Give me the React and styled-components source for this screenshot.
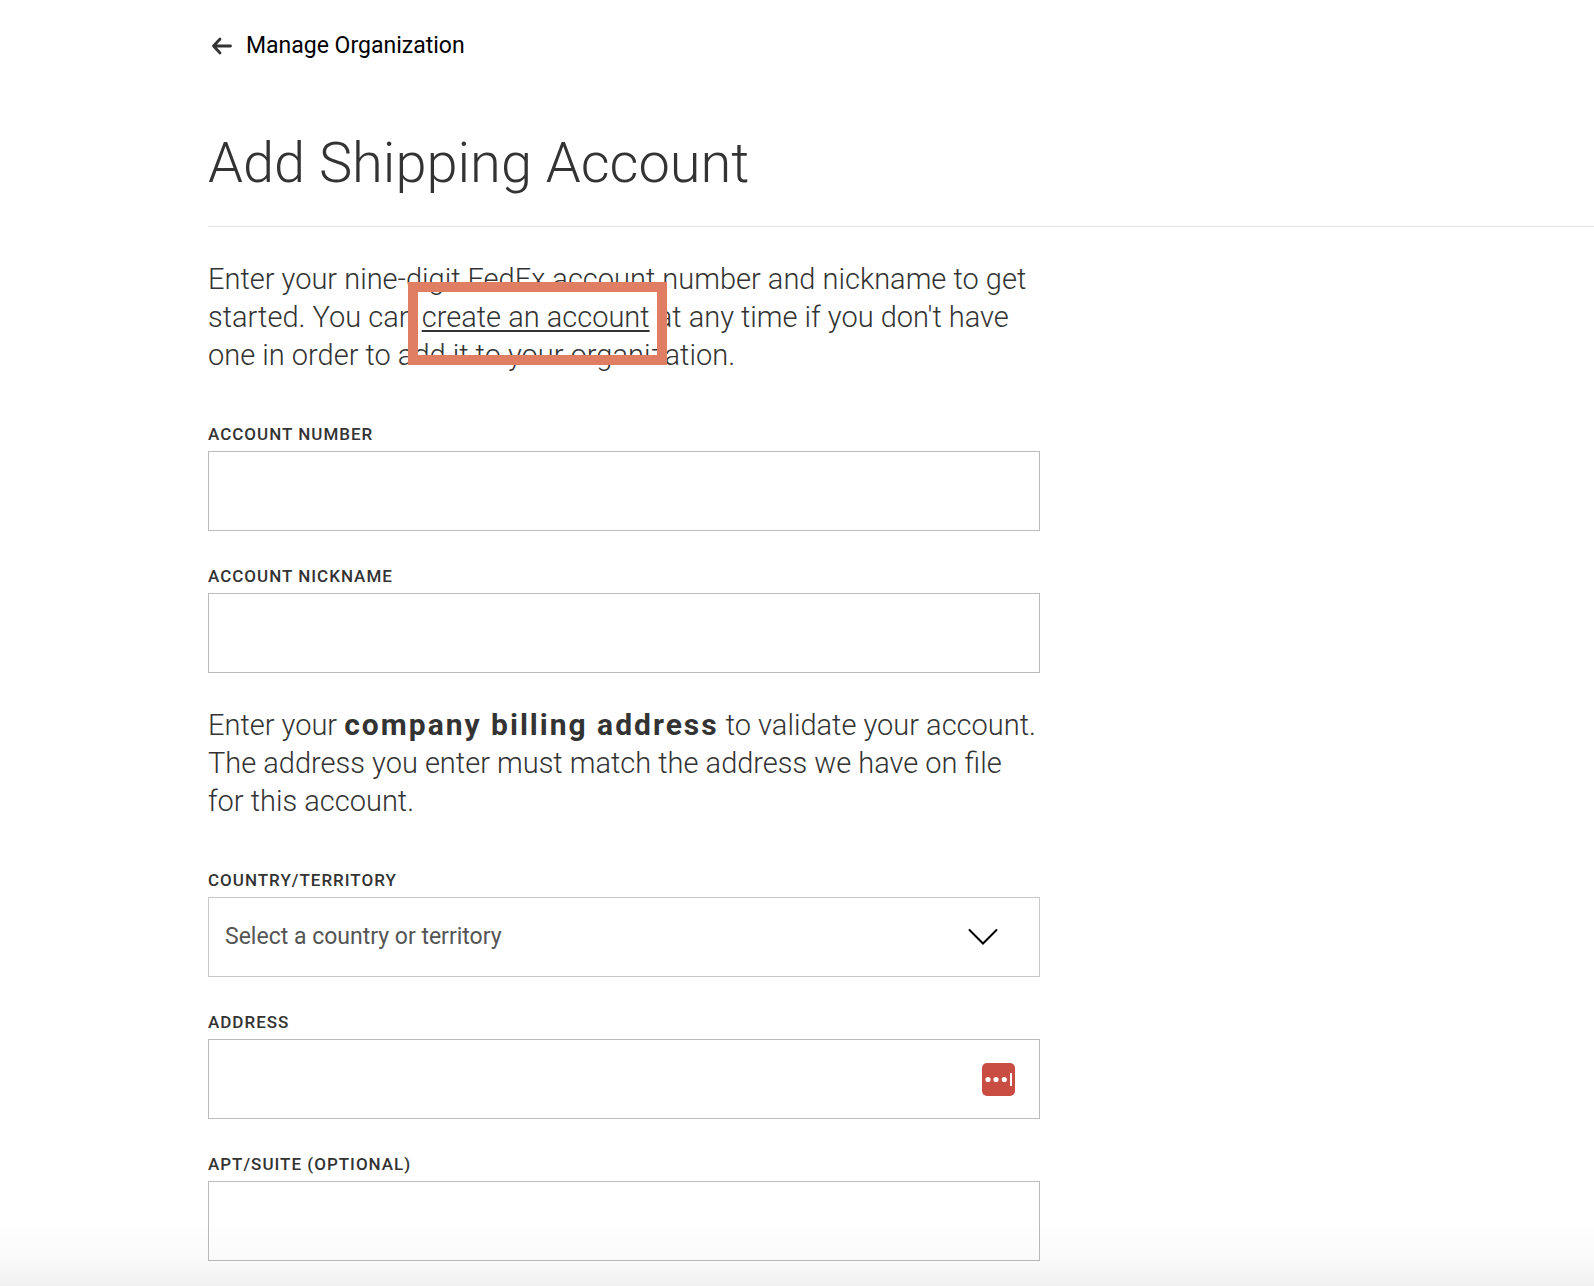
import React from "react";
import styled, { createGlobalStyle } from "styled-components";

const GlobalStyle = createGlobalStyle`
  *, *::before, *::after { box-sizing: border-box; }
  body {
    margin: 0;
    background: #fff;
    color: #333;
    font-family: Roboto, "Liberation Sans", sans-serif;
  }
`;

const Page = styled.main`
  min-height: 100vh;
  padding: 30px 0 24px 208px;
`;

const BackLink = styled.a`
  display: inline-flex;
  align-items: center;
  gap: 13px;
  padding-left: 3px;
  color: #000;
  font-size: 23px;
  line-height: 32px;
  text-decoration: none;
`;

const Header = styled.header`
  margin-top: 61px;
  padding-bottom: 23px;
  border-bottom: 1px solid #e3e3e3;
`;

const Title = styled.h1`
  margin: 0;
  font-size: 56px;
  font-weight: 300;
  line-height: 80px;
`;

const Form = styled.form`
  display: flex;
  flex-direction: column;
  gap: 33px;
  max-width: 832px;
  padding-top: 33px;
`;

const Intro = styled.p`
  margin: 0 0 15px;
  font-size: 29px;
  font-weight: 300;
  line-height: 38px;
`;

const Strong = styled.strong`
  font-size: 30px;
  font-weight: 700;
  line-height: 1;
  letter-spacing: 2px;
`;

const CreateLink = styled.a`
  position: relative;
  color: inherit;
  text-decoration: underline;
  text-decoration-thickness: 2px;
  text-underline-offset: 3px;
  white-space: nowrap;
`;

const Highlight = styled.span`
  position: absolute;
  inset: -18px -17px -31px -14px;
  border: 10px solid #e07e63;
  pointer-events: none;
`;

const FieldGroup = styled.div`
  display: flex;
  flex-direction: column;
  gap: 5px;
`;

const Label = styled.label`
  font-size: 17px;
  font-weight: 500;
  line-height: 24px;
  letter-spacing: 1px;
  text-transform: uppercase;
`;

const Control = styled.div`
  position: relative;
  display: flex;
`;

const Input = styled.input`
  width: 100%;
  height: 80px;
  padding: 0 16px;
  border: 1px solid #bbb;
  border-radius: 0;
  background: transparent;
  color: #333;
  font: 400 23px/32px Roboto, "Liberation Sans", sans-serif;
`;

const Select = styled.select`
  width: 100%;
  height: 80px;
  padding: 0 72px 0 16px;
  border: 1px solid #c8c8c8;
  border-radius: 0;
  background: transparent;
  color: #555;
  font: 400 23px/32px Roboto, "Liberation Sans", sans-serif;
  appearance: none;
`;

const Adornment = styled.span`
  position: absolute;
  top: 0;
  bottom: 0;
  right: ${(p) => p.$right}px;
  display: flex;
  align-items: center;
  pointer-events: none;
`;

const BottomFade = styled.div`
  position: fixed;
  left: 0;
  right: 0;
  bottom: 0;
  height: 64px;
  background: linear-gradient(rgba(0, 0, 0, 0), rgba(0, 0, 0, 0.02) 60%, rgba(0, 0, 0, 0.055));
  pointer-events: none;
`;

function ArrowIcon() {
  return (
    <svg width="22" height="18" viewBox="0 0 22 18" fill="none" stroke="#333" strokeWidth="2.8" strokeLinecap="round" strokeLinejoin="round" aria-hidden="true">
      <path d="M19.500 9H2.500M9 2L2.500 9L9 16" />
    </svg>
  );
}

function ChevronIcon() {
  return (
    <svg width="30" height="18" viewBox="0 0 30 18" fill="none" stroke="#000" strokeWidth="2" strokeLinecap="round" aria-hidden="true">
      <path d="M1.5 2L15 15.5L28.500 2" />
    </svg>
  );
}

function PasswordManagerIcon() {
  return (
    <svg width="33" height="33" viewBox="0 0 33 33" aria-hidden="true">
      <rect width="33" height="33" rx="5" fill="#c94d42" />
      <g fill="#fff">
        <circle cx="6" cy="16.500" r="2.600" />
        <circle cx="14" cy="16.500" r="2.600" />
        <circle cx="22.300" cy="16.500" r="2.600" />
        <rect x="28" y="10" width="2" height="13" />
      </g>
    </svg>
  );
}

function Field({ id, label, children }) {
  return (
    <FieldGroup>
      <Label htmlFor={id}>{label}</Label>
      <Control>{children || <Input id={id} type="text" />}</Control>
    </FieldGroup>
  );
}

export default function App() {
  return (
    <>
      <GlobalStyle />
      <Page>
        <BackLink href="#organization">
          <ArrowIcon />
          Manage Organization
        </BackLink>
        <Header>
          <Title>Add Shipping Account</Title>
        </Header>
        <Form>
          <Intro>
            Enter your nine-digit FedEx account number and nickname to get started. You can{" "}
            <CreateLink href="#create">
              create an account
              <Highlight />
            </CreateLink>{" "}
            at any time if you don't have one in order to add it to your organization.
          </Intro>
          <Field id="number" label="Account number" />
          <Field id="nickname" label="Account nickname" />
          <Intro>
            Enter your <Strong>company billing address</Strong> to validate your account. The address you
            enter must match the address we have on file for this account.
          </Intro>
          <Field id="country" label="Country/Territory">
            <Select id="country">
              <option>Select a country or territory</option>
            </Select>
            <Adornment $right={42}>
              <ChevronIcon />
            </Adornment>
          </Field>
          <Field id="address" label="Address">
            <Input id="address" type="text" />
            <Adornment $right={25}>
              <PasswordManagerIcon />
            </Adornment>
          </Field>
          <Field id="suite" label="Apt/Suite (optional)" />
        </Form>
      </Page>
      <BottomFade />
    </>
  );
}
